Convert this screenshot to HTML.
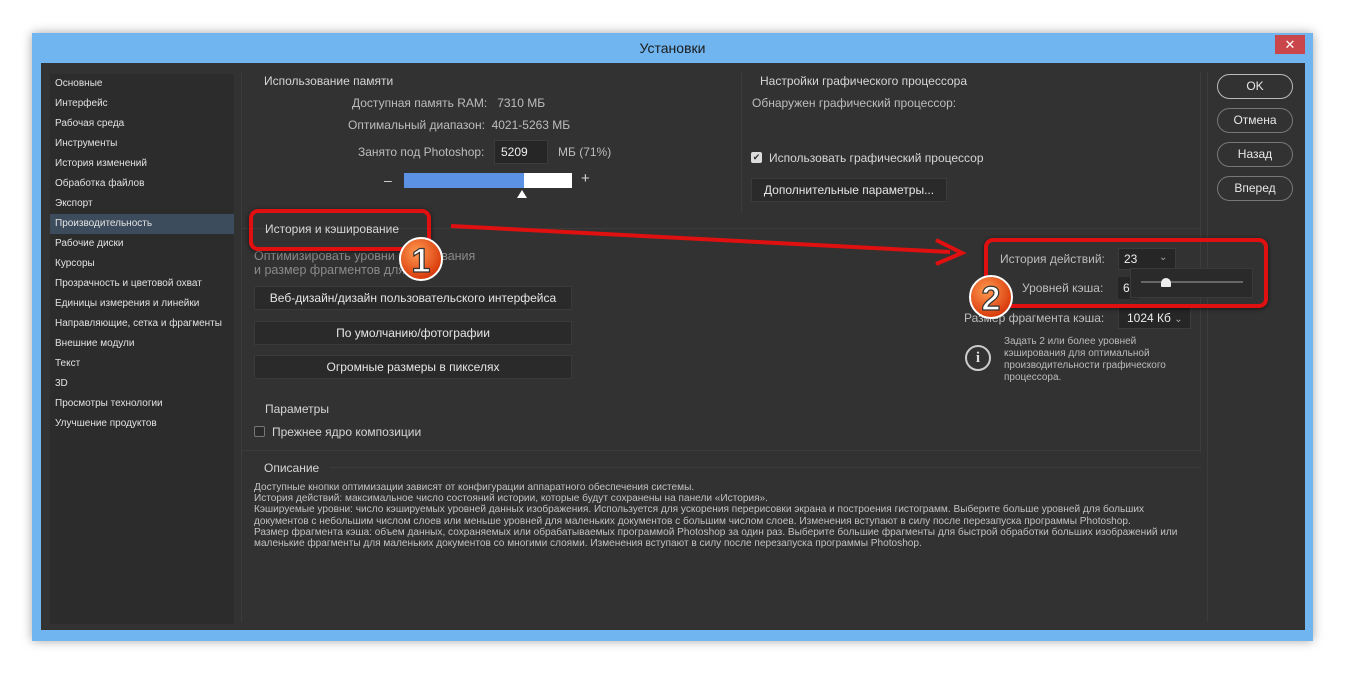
<!DOCTYPE html>
<html><head><meta charset="utf-8"><style>
*{margin:0;padding:0;box-sizing:border-box}
body{width:1345px;height:674px;background:#fff;position:relative;overflow:hidden;font-family:"Liberation Sans","DejaVu Sans",sans-serif;color:#d6d6d6}
.a{position:absolute;white-space:nowrap}
.win{position:absolute;left:32px;top:33px;width:1281px;height:608px;background:#70b5ef;box-shadow:0 0 10px rgba(0,0,0,.35)}
.dark{position:absolute;left:41px;top:63px;width:1264px;height:567px;background:#323232}
.side{position:absolute;left:50px;top:74px;width:184px;height:550px;background:#2c2c2c}
.side div{height:20px;line-height:20px;padding-left:5px;font-size:10px;color:#e2e2e2}
.side .sel{background:#3d4c5d}
.btn{position:absolute;background:#2a2a2a;border:1px solid #3a3a3a;font-size:12px;color:#e6e6e6;text-align:center}
.rb{position:absolute;left:1217px;width:76px;height:25px;border:1.5px solid #bbb;border-radius:13px;font-size:12px;color:#e8e8e8;text-align:center;line-height:22px}
.s12{font-size:12px}.lab{color:#bdbdbd}
.desc{position:absolute;left:254px;top:482px;font-size:10.1px;line-height:11.2px;color:#c2c2c2;white-space:nowrap}
</style></head><body>
<div class="win"></div>
<div class="a" style="left:0;width:1345px;top:40px;text-align:center;font-size:14px;color:#1a1a1a">Установки</div>
<div class="a" style="left:1275px;top:35px;width:30px;height:19px;background:#c9464a;color:#fff;text-align:center;font-size:13px;line-height:19px">✕</div>
<div class="dark"></div>
<div class="side">
<div style="margin-top:0">Основные</div><div>Интерфейс</div><div>Рабочая среда</div><div>Инструменты</div><div>История изменений</div><div>Обработка файлов</div><div>Экспорт</div><div class="sel">Производительность</div><div>Рабочие диски</div><div>Курсоры</div><div>Прозрачность и цветовой охват</div><div>Единицы измерения и линейки</div><div>Направляющие, сетка и фрагменты</div><div>Внешние модули</div><div>Текст</div><div>3D</div><div>Просмотры технологии</div><div>Улучшение продуктов</div>
</div>
<div class="a" style="left:241px;top:72px;width:1px;height:550px;background:#3c3c3c"></div>
<div class="a" style="left:741px;top:72px;width:1px;height:140px;background:#3c3c3c"></div>
<div class="a" style="left:1200px;top:72px;width:1px;height:380px;background:#3c3c3c"></div>
<div class="a" style="left:241px;top:228px;width:960px;height:1px;background:#3c3c3c"></div>
<div class="a" style="left:241px;top:450px;width:960px;height:1px;background:#3c3c3c"></div>
<div class="a" style="left:1207px;top:72px;width:1px;height:550px;background:#3c3c3c"></div>
<div class="a" style="left:330px;top:467px;width:871px;height:1px;background:#3c3c3c"></div>

<div class="a s12" style="left:264px;top:74px">Использование памяти</div>
<div class="a s12 lab" style="left:352px;top:96px">Доступная память RAM:&nbsp;&nbsp; 7310 МБ</div>
<div class="a s12 lab" style="left:348px;top:118px">Оптимальный диапазон:&nbsp;&nbsp;4021-5263 МБ</div>
<div class="a s12 lab" style="left:358px;top:145px">Занято под Photoshop:</div>
<div class="a" style="left:494px;top:140px;width:54px;height:24px;background:#262626;border:1px solid #3c3c3c;font-size:12px;color:#eee;padding:4px 0 0 6px">5209</div>
<div class="a s12 lab" style="left:558px;top:145px">МБ (71%)</div>
<div class="a" style="left:384px;top:172px;font-size:14px">–</div>
<div class="a" style="left:404px;top:173px;width:120px;height:15px;background:#5b92e4"></div>
<div class="a" style="left:524px;top:173px;width:48px;height:15px;background:#fff"></div>
<div class="a" style="left:581px;top:170px;font-size:15px">+</div>
<div class="a" style="left:517px;top:190px;width:0;height:0;border-left:5px solid transparent;border-right:5px solid transparent;border-bottom:8px solid #fff"></div>

<div class="a s12" style="left:760px;top:74px">Настройки графического процессора</div>
<div class="a s12 lab" style="left:752px;top:96px">Обнаружен графический процессор:</div>
<div class="a" style="left:751px;top:152px;width:11px;height:11px;background:#ddd;border-radius:2px;color:#333;font-size:9px;line-height:11px;text-align:center">✔</div>
<div class="a s12" style="left:769px;top:151px">Использовать графический процессор</div>
<div class="btn" style="left:751px;top:178px;width:196px;height:24px;line-height:22px">Дополнительные параметры...</div>

<div class="a s12" style="left:265px;top:222px">История и кэширование</div>
<div class="a" style="left:254px;top:249px;color:#8a8a8a;line-height:14px;font-size:12.5px">Оптимизировать уровни кэширования<br>и размер фрагментов для</div>
<div class="btn" style="left:254px;top:286px;width:318px;height:24px;line-height:22px">Веб-дизайн/дизайн пользовательского интерфейса</div>
<div class="btn" style="left:254px;top:321px;width:318px;height:24px;line-height:22px">По умолчанию/фотографии</div>
<div class="btn" style="left:254px;top:355px;width:318px;height:24px;line-height:22px">Огромные размеры в пикселях</div>
<div class="a s12" style="left:265px;top:402px">Параметры</div>
<div class="a" style="left:254px;top:426px;width:11px;height:11px;border:1px solid #777;border-radius:2px;background:#2a2a2a"></div>
<div class="a s12" style="left:272px;top:425px">Прежнее ядро композиции</div>

<div class="a s12 lab" style="left:1000px;top:252px">История действий:</div>
<div class="a" style="left:1118px;top:248px;width:58px;height:22px;background:#262626;border:1px solid #3c3c3c;font-size:12px;color:#eee;padding:3px 0 0 5px">23<span style="position:absolute;left:40px;top:3px;color:#aaa;font-size:10px">⌄</span></div>
<div class="a s12 lab" style="left:1022px;top:281px">Уровней кэша:</div>
<div class="a" style="left:1118px;top:277px;width:20px;height:22px;background:#262626;font-size:12px;color:#eee;padding:4px 0 0 5px">6</div>
<div class="a" style="left:1130px;top:268px;width:123px;height:30px;background:#2a2a2a;border:1px solid #3a3a3a"></div>
<div class="a" style="left:1141px;top:281px;width:102px;height:2px;background:#666"></div>
<div class="a" style="left:1161px;top:278px;width:10px;height:9px;background:#eee;border-radius:5px 5px 1px 1px"></div>
<div class="a s12 lab" style="left:964px;top:311px">Размер фрагмента кэша:</div>
<div class="a" style="left:1118px;top:306px;width:73px;height:23px;background:#262626;border:1px solid #3c3c3c;font-size:12px;color:#eee;padding:4px 0 0 8px">1024 Кб <span style="color:#aaa;font-size:10px">⌄</span></div>
<div class="a" style="left:965px;top:345px;width:26px;height:26px;border:2px solid #ccc;border-radius:50%;text-align:center;font:bold 15px/22px 'Liberation Serif',serif;color:#ddd">i</div>
<div class="a" style="left:1004px;top:336px;font-size:10px;line-height:12px;color:#bbb">Задать 2 или более уровней<br>кэширования для оптимальной<br>производительности графического<br>процессора.</div>

<div class="a s12" style="left:264px;top:461px">Описание</div>
<div class="desc">Доступные кнопки оптимизации зависят от конфигурации аппаратного обеспечения системы.<br>История действий: максимальное число состояний истории, которые будут сохранены на панели «История».<br>Кэшируемые уровни: число кэшируемых уровней данных изображения. Используется для ускорения перерисовки экрана и построения гистограмм. Выберите больше уровней для больших<br>документов с небольшим числом слоев или меньше уровней для маленьких документов с большим числом слоев. Изменения вступают в силу после перезапуска программы Photoshop.<br>Размер фрагмента кэша: объем данных, сохраняемых или обрабатываемых программой Photoshop за один раз. Выберите большие фрагменты для быстрой обработки больших изображений или<br>маленькие фрагменты для маленьких документов со многими слоями. Изменения вступают в силу после перезапуска программы Photoshop.</div>

<div class="rb" style="top:74px">OK</div>
<div class="rb" style="top:108px;border-color:#777">Отмена</div>
<div class="rb" style="top:142px;border-color:#777">Назад</div>
<div class="rb" style="top:176px;border-color:#777">Вперед</div>

<div class="a" style="left:249px;top:209px;width:182px;height:42px;border:4px solid #e01010;border-radius:9px;box-shadow:0 1px 4px rgba(0,0,0,.6)"></div>
<div class="a" style="left:984px;top:238px;width:284px;height:70px;border:4px solid #e01010;border-radius:9px;box-shadow:0 1px 4px rgba(0,0,0,.6)"></div>
<svg class="a" style="left:0;top:0" width="1345" height="674">
<line x1="451" y1="226" x2="950" y2="252" stroke="#e01010" stroke-width="4"/>
<path d="M936 240 L962 253 L936 264" fill="none" stroke="#e01010" stroke-width="4"/>
<defs><radialGradient id="g" cx="40%" cy="35%" r="65%"><stop offset="0" stop-color="#ff9a50"/><stop offset="1" stop-color="#d8380a"/></radialGradient></defs>
<circle cx="421" cy="259" r="21" fill="url(#g)" stroke="#fff" stroke-width="2"/>
<text x="421" y="272" text-anchor="middle" font-family="Liberation Sans" font-weight="bold" font-size="34" fill="#fff" stroke="#333" stroke-width="1.2">1</text>
<circle cx="991" cy="297" r="21" fill="url(#g)" stroke="#fff" stroke-width="2"/>
<text x="991" y="310" text-anchor="middle" font-family="Liberation Sans" font-weight="bold" font-size="34" fill="#fff" stroke="#333" stroke-width="1.2">2</text>
</svg>
</body></html>
